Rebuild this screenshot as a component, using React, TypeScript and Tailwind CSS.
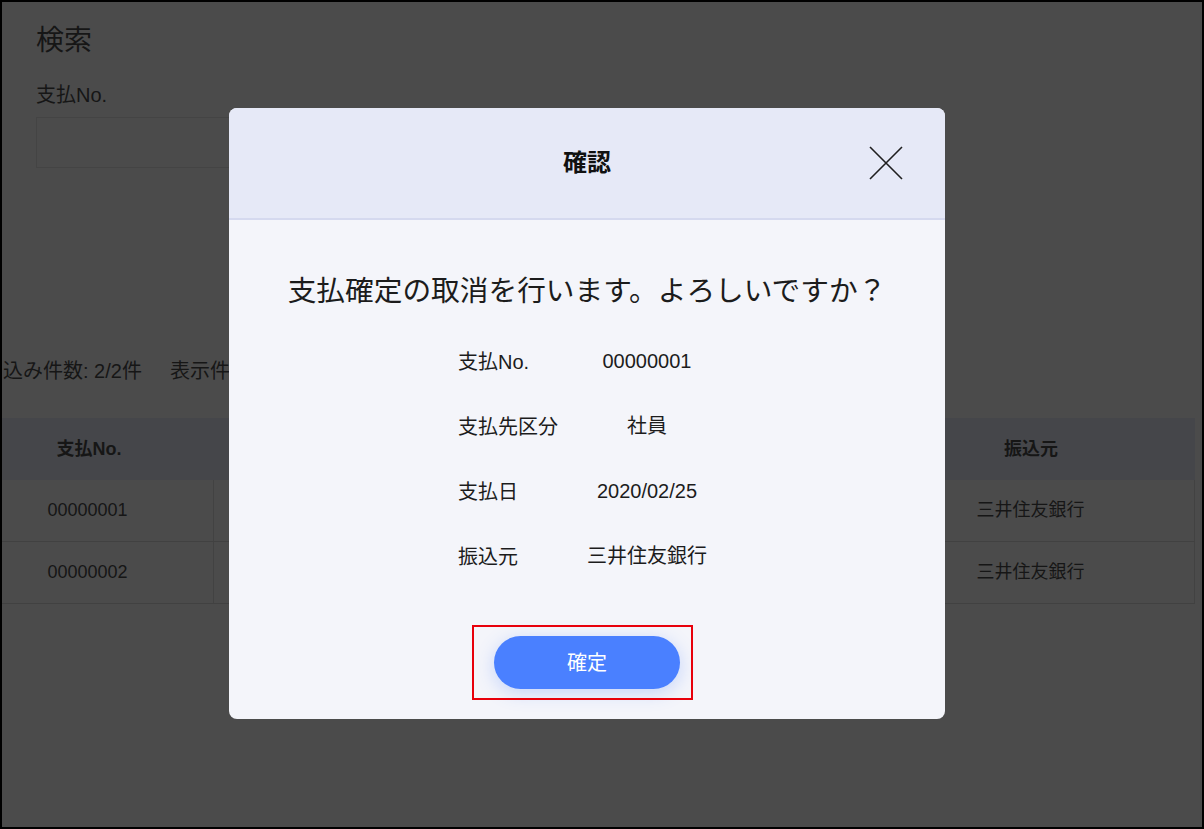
import React from "react";

const font = { fontFamily: '"Liberation Sans", "Noto Sans CJK JP", sans-serif' };

function CloseIcon() {
  return (
    <svg width="34" height="34" viewBox="0 0 34 34" fill="none">
      <path d="M1 1L33 33M33 1L1 33" stroke="#1f1f1f" strokeWidth="1.6" />
    </svg>
  );
}

export default function App() {
  const details = [
    ["支払No.", "00000001"],
    ["支払先区分", "社員"],
    ["支払日", "2020/02/25"],
    ["振込元", "三井住友銀行"],
  ];
  return (
    <div
      className="relative w-[1204px] h-[829px] overflow-hidden border-2 border-black bg-[#4b4b4b] text-[#161616]"
      style={font}
    >
      {/* underlying page */}
      <div className="flex flex-col">
        <div className="pl-[34px] pt-[21px]">
          <div className="text-[28px] leading-[36px]">検索</div>
          <div className="mt-[22px] text-[20px] leading-[28px]">支払No.</div>
          <div className="mt-[8px] h-[51px] w-[420px] border border-[#444444]" />
        </div>
        <div className="mt-[189px] flex items-center pl-[1px] text-[20px] leading-[28px]">
          <span>込み件数: 2/2件</span>
          <span className="ml-[28px]">表示件数: 20件</span>
        </div>
        <div className="mt-[33px] w-[1193px] text-[18px]">
          <div className="flex h-[62px] items-center bg-[#45464a] font-bold">
            <div className="w-[212px] pr-[38px] text-center">支払No.</div>
            <div className="flex-1" />
            <div className="w-[328px] text-center">振込元</div>
          </div>
          {["00000001", "00000002"].map((n) => (
            <div key={n} className="flex h-[62px] items-center border-b border-[#414141]">
              <div className="flex h-full w-[212px] items-center justify-center border-r border-[#424242] pr-[40px]">
                {n}
              </div>
              <div className="h-full flex-1" />
              <div className="flex h-full w-[328px] items-center justify-center border-r border-[#424242]">
                三井住友銀行
              </div>
            </div>
          ))}
        </div>
      </div>

      {/* modal */}
      <div className="absolute left-[227px] top-[106px] flex w-[716px] flex-col overflow-hidden rounded-[8px] bg-[#f4f5fa]">
        <div className="relative flex h-[112px] items-center justify-center border-b-2 border-[#d5d9ef] bg-[#e6e9f7]">
          <span className="text-[24px] font-bold text-[#111111]">確認</span>
          <div className="absolute right-[42px] top-[38px]">
            <CloseIcon />
          </div>
        </div>
        <div className="flex flex-col items-center pt-[51px] pb-[30px]">
          <div className="text-[28.7px] leading-[40px] text-[#1c1c1c]">
            支払確定の取消を行います。よろしいですか？
          </div>
          <div className="mt-[17px] flex flex-col self-stretch">
            {details.map(([k, v]) => (
              <div key={k} className="flex h-[65px] items-center text-[20px] text-[#1c1c1c]">
                <div className="ml-[229px] w-[109px] pt-[3px]">{k}</div>
                <div className="w-[160px] text-center">{v}</div>
              </div>
            ))}
          </div>
          <button className="mt-[48px] h-[53px] w-[186px] rounded-full bg-[#4a80ff] text-[20px] text-white shadow-[0_4px_18px_rgba(74,128,255,0.28)]">
            確定
          </button>
        </div>
      </div>

      {/* annotation */}
      <div className="absolute left-[470px] top-[623px] h-[75px] w-[221px] border-2 border-[#e8000b]" />
    </div>
  );
}
